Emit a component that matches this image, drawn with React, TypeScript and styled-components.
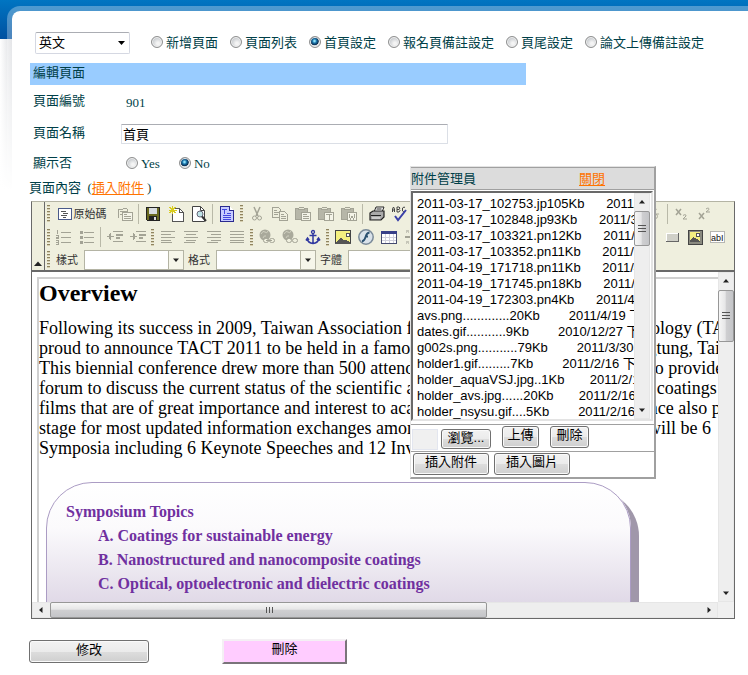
import React from "react";
import styled, { createGlobalStyle, css } from "styled-components";
import {
  Undo, Redo, Search, Replace, SquareDashed, Eraser, Bold, Italic, Underline, Strikethrough,
  Smile, Omega, FileMinus, FormInput, CheckSquare, CircleDot, TextCursorInput, AlignJustify,
  List, ChevronsUpDown,
} from "lucide-react";

const serif = `"Liberation Serif", "Noto Sans CJK TC", serif`;
const sans = `"Liberation Sans", "Noto Sans CJK TC", sans-serif`;
const ink = "#003f48";

const GlobalStyle = createGlobalStyle`
  * { box-sizing: border-box; }
  body {
    margin: 0;
    color: ${ink};
    font: 13px/16px ${serif};
    background: #fff;
    overflow: hidden;
  }
`;

const Page = styled.div`
  padding: 6px 0 0 7px;
  background:
    linear-gradient(#0075c2, #0050a0) 0 0 / 100% 39px no-repeat,
    linear-gradient(rgba(255, 255, 255, 0) 39px, #fff 190px),
    linear-gradient(to right, #fff, #d8dade 12px);
`;

const Shell = styled.div`
  position: relative;
  border: solid rgba(255, 255, 255, 0.3);
  border-width: 5px 0 0 5px;
  border-radius: 13px 0 0 0;
  background: #fff;
  background-clip: padding-box;
  padding: 21px 13px 12px 0;
`;

const TopBar = styled.div`
  display: flex;
  align-items: center;
  height: 22px;
  padding-left: 23px;
  margin-bottom: 9px;
  white-space: nowrap;
`;

const LanguageBox = styled.label`
  position: relative;
  display: flex;
  margin-right: 21px;
  svg {
    position: absolute;
    right: 5px;
    top: 9px;
    pointer-events: none;
  }
`;

const Language = styled.select`
  appearance: none;
  width: 95px;
  height: 22px;
  padding: 0 3px;
  border: 1px solid #d5d8e2;
  border-top-color: #abadb3;
  border-radius: 2px;
  background: #fff;
  color: #000;
  font: 13px/18px ${sans};
`;

const RadioLabel = styled.label<{ $gap?: number }>`
  display: inline-flex;
  align-items: center;
  gap: 3px;
  margin-right: ${(p) => p.$gap ?? 12}px;
`;

const Radio = styled.input.attrs({ type: "radio" })`
  appearance: none;
  width: 12px;
  height: 12px;
  margin: 0 0 2px;
  border: 1px solid #8e8f8f;
  border-radius: 50%;
  background: radial-gradient(circle at 60% 65%, #f4f4f4 0 15%, #c4c8cc 70%);
  box-shadow: inset 0 0 0 1px #f0f0f0;
  &:checked {
    background: radial-gradient(circle at 45% 40%, #8fe0f8 0 8%, #1a76ac 25%, #0a2c50 48%, #d4dadf 56%);
  }
`;

const SectionTitle = styled.h1`
  width: 496px;
  height: 22px;
  margin: 0 0 0 18px;
  padding: 2px 3px 0;
  background: #99ccff;
  font: 13px/16px ${serif};
`;

const FormRow = styled.div<{ $h: number }>`
  display: flex;
  align-items: center;
  height: ${(p) => p.$h}px;
  padding-left: 21px;
`;

const FieldName = styled.span`
  width: 88px;
  padding-bottom: 2px;
`;

const Value = styled.span`
  padding: 1px 0 0 5px;
`;

const NameInput = styled.input`
  width: 327px;
  height: 20px;
  padding: 0 1px 2px;
  border: 1px solid #dbdfe6;
  border-top-color: #abadb3;
  border-radius: 1px;
  color: #000;
  font: 13px/16px ${sans};
`;

const ContentLine = styled.div`
  height: 23px;
  padding: 2px 0 0 17px;
`;

const Orange = styled.a`
  color: #ff7300;
  text-decoration: underline;
  text-underline-offset: 2px;
`;

/* ---------- editor toolbar ---------- */

const Editor = styled.section`
  margin-left: 19px;
  border: 1px solid #696969;
  border-top-color: #b4b4a4;
`;

const Toolbar = styled.div`
  display: flex;
  height: 70px;
  background: #efefde;
  border-bottom: 2px solid #696969;
  overflow: hidden;
`;

const Collapse = styled.button`
  display: flex;
  align-items: flex-end;
  flex: none;
  width: 13px;
  padding: 0 0 2px 2px;
  border: 0;
  border-right: 1px solid #696969;
  background: none;
`;

const ToolRows = styled.div`
  flex: none;
`;

const ToolRow = styled.div<{ $h: number }>`
  display: flex;
  align-items: center;
  height: ${(p) => p.$h}px;
  color: #333;
  font: 11px/14px ${sans};
  white-space: nowrap;
`;

const Grip = styled.span`
  flex: none;
  width: 3px;
  height: 17px;
  margin: 0 2px;
  background: repeating-linear-gradient(#8f8460 0 1px, #d6cfb0 1px 2px, #efefde 2px 3px);
`;

const Sep = styled.span`
  flex: none;
  width: 1px;
  height: 20px;
  margin: 0 2px;
  background: #b9b9a8;
`;

const Tool = styled.button<{ $off?: boolean }>`
  display: inline-flex;
  align-items: center;
  justify-content: center;
  flex: none;
  width: 23px;
  height: 22px;
  padding: 0;
  border: 0;
  background: none;
  color: ${(p) => (p.$off ? "#a3a395" : "#333")};
`;

const SourceTool = styled(Tool)`
  gap: 2px;
  width: 61px;
  padding-right: 1px;
  font: 11px/14px ${sans};
`;

const Combo = styled.label`
  display: inline-flex;
  align-items: center;
  gap: 6px;
  margin-left: 4px;
`;

const ComboBox = styled.span`
  display: inline-flex;
  width: 100px;
  height: 20px;
  border: 1px solid #b4b4a4;
  background: #fff;
`;

const ComboSelect = styled.select`
  appearance: none;
  flex: 1;
  min-width: 0;
  border: 0;
  background: none;
  padding: 0;
`;

const ComboArrow = styled.span`
  display: flex;
  align-items: center;
  justify-content: center;
  width: 15px;
  border-left: 1px solid #b4b4a4;
  background: #f6f6ea;
`;

/* ---------- editing area ---------- */

const Frame = styled.div`
  display: grid;
  grid-template: 330px 16px / 1fr 16px;
  background: #fff;
`;

const Viewport = styled.div`
  overflow: hidden;
  min-width: 0;
  padding: 5px 0 0 5px;
`;

const Doc = styled.div`
  height: 400px;
  border: 2px solid #d0d0d0;
  border-right: 0;
  color: #000;
  font: 18px/20px "Liberation Serif", serif;
  white-space: nowrap;
`;

const DocTitle = styled.h2`
  margin: 0 0 11px;
  font: bold 24px/28px "Liberation Serif", serif;
`;

const DocText = styled.p`
  margin: 0;
`;

const Topics = styled.div`
  width: 585px;
  height: 200px;
  margin: 24px 0 0 7px;
  padding: 17px 19px;
  border: 1px solid #ab9cc4;
  border-radius: 46px;
  background: linear-gradient(#fff 0, #fbfafc 45px, #e0d9e7 120px);
  box-shadow: 8px 8px 0 #a097aa;
  color: #7030a0;
  font: bold 16px/24px "Liberation Serif", serif;
`;

const TopicList = styled.ol`
  margin: 0;
  padding-left: 32px;
  list-style: none;
`;

const thumb = css`
  border: 1px solid #979797;
  border-radius: 2px;
`;

const Track = styled.div<{ $row?: boolean }>`
  display: flex;
  flex: 0 0 16px;
  flex-direction: ${(p) => (p.$row ? "row" : "column")};
  align-items: stretch;
  background: #eeeeee;
  box-shadow: inset 0 0 0 1px #e6e6e6;
  min-width: 0;
`;

const Thumb = styled.div<{ $row?: boolean; $len: number }>`
  ${thumb}
  display: flex;
  align-items: center;
  justify-content: center;
  flex: 0 1 ${(p) => p.$len}px;
  background: linear-gradient(${(p) => (p.$row ? "to bottom" : "to right")}, #f6f6f6, #e6e6e7 45%, #cfcfd1 50%, #c4c5c8);
`;

const Arrow = styled.span`
  display: flex;
  align-items: center;
  justify-content: center;
  flex: 0 0 18px;
`;

const Spring = styled.span`
  flex: 1;
`;

const Corner = styled.div`
  background: #f0f0f0;
`;

/* ---------- attachment window ---------- */

const Popup = styled.aside`
  position: absolute;
  left: 398px;
  top: 155px;
  width: 246px;
  border: 1px solid #a0a0a0;
  border-width: 1px 2px 2px 1px;
  border-style: solid double double solid;
  border-left-color: #e3e3e3;
  border-top-color: #e3e3e3;
  background: #fff;
`;

const PopupHead = styled.header`
  display: flex;
  height: 23px;
  padding-top: 3px;
  border: 1px solid #a0a0a0;
  border-width: 1px 0;
  background: #dcdcdc;
`;

const PopupTitle = styled.span`
  width: 168px;
`;

const ListFrame = styled.div`
  display: flex;
  height: 230px;
  margin: 1px 1px 3px 0;
  padding: 0 1px 0 1px;
  border: 2px solid #696969;
  border-right-color: #e3e3e3;
  border-bottom-color: #e3e3e3;
`;

const FileList = styled.select`
  flex: 1;
  min-width: 0;
  height: 226px;
  padding: 0;
  border: 0;
  outline: 0;
  overflow: hidden;
  scrollbar-width: none;
  background: #fff;
  color: #000;
  font: 13px/16px ${sans};
`;

const FileOption = styled.option`
  height: 16px;
  min-height: 16px;
  padding: 0 0 0 3px;
  line-height: 14px;
  color: #000;
`;

const Actions = styled.div<{ $h: number }>`
  display: flex;
  align-items: flex-start;
  height: ${(p) => p.$h}px;
  padding: 1px 2px;
  border-top: 1px solid #a0a0a0;
`;

const FileField = styled.input`
  width: 26px;
  height: 21px;
  margin: 3px 3px 0 -1px;
  border: 1px solid #e3e6ef;
  background: #f0f0f0;
`;

const Button = styled.button<{ $w: number; $h?: number; $gap?: number }>`
  width: ${(p) => p.$w}px;
  height: ${(p) => p.$h ?? 22}px;
  margin-right: ${(p) => p.$gap ?? 0}px;
  padding: 0 0 4px;
  border: 1px solid #707070;
  border-radius: 3px;
  box-shadow: inset 0 0 0 1px #fafafa;
  background: linear-gradient(#f2f2f2, #ebebeb 50%, #dddddd 51%, #cfcfcf);
  color: #000;
  font: 13px/16px ${sans};
  white-space: nowrap;
`;

const BrowseButton = styled(Button)`
  margin-top: 3px;
  padding-bottom: 2px;
`;

const PinkButton = styled.button`
  width: 125px;
  height: 25px;
  padding: 0 0 5px;
  border: 2px solid;
  border-color: #f4f0f4 #7a747a #7a747a #f4f0f4;
  background: #ffccff;
  color: #000;
  font: 13px/16px ${sans};
`;

const Footer = styled.footer`
  display: flex;
  align-items: center;
  gap: 73px;
  padding: 20px 0 0 17px;
`;

/* ---------- icons ---------- */

function Ico({ children, w = 16, smooth = false }: { children: React.ReactNode; w?: number; smooth?: boolean }) {
  return (
    <svg width={w} height="16" viewBox={`0 0 ${w} 16`} fill="none" stroke="currentColor" shapeRendering={smooth ? "auto" : "crispEdges"} aria-hidden="true">
      {children}
    </svg>
  );
}

function Tri({ dir, size = 3 }: { dir: "up" | "down" | "left" | "right"; size?: number }) {
  const turn = { up: 180, down: 0, left: 90, right: 270 }[dir];
  return (
    <svg width="8" height="8" viewBox="-4 -4 8 8" aria-hidden="true">
      <path d={`M${-size} ${-size / 2}H${size}L0 ${size / 2 + 0.5}Z`} fill="#222" transform={`rotate(${turn})`} />
    </svg>
  );
}

function Ridges({ row }: { row?: boolean }) {
  return (
    <svg width="8" height="8" viewBox="0 0 8 8" stroke="#555" shapeRendering="crispEdges" aria-hidden="true">
      <path d={row ? "M1.5 1v6M4.5 1v6M7.5 1v6" : "M0 .5h8M0 3.5h8M0 6.5h8"} />
    </svg>
  );
}

const SourceIcon = () => (
  <Ico w={14}><rect x=".5" y="2.5" width="13" height="11" fill="#fff" stroke="#4a5a8a" /><path d="M3 5.5h5M5 7.5h5M3 9.5h6M5 11.5h3" stroke="#555" /></Ico>
);
const TemplatesIcon = () => (
  <Ico><path d="M1.5 12V3.5h4l1-1.5h3l1 1.5v3M3 5.5h7M3 8.5h2" /><rect x="5.5" y="6.5" width="10" height="8" fill="#f4f4e8" /><path d="M7 8.5h3M7 10.5h7M7 12.5h7" /></Ico>
);
const SaveIcon = () => (
  <Ico><path d="M1.5 1.5h13v13H2.5l-1-1z" fill="#6a6a20" stroke="#222" /><rect x="4" y="2" width="8" height="6" fill="#d8dce0" stroke="none" /><rect x="4" y="10" width="8" height="4" fill="#222" stroke="none" /><rect x="9" y="11" width="2" height="3" fill="#ddd" stroke="none" /></Ico>
);
const NewIcon = () => (
  <Ico><path d="M4.5 2.5h7l4 4v9h-11z" fill="#fff" stroke="#555" /><path d="M11.5 2.5v4h4" stroke="#555" /><path d="M4.5 0v8M.5 4h8M1.5 1l6 6M7.5 1l-6 6" stroke="#d8cc20" /></Ico>
);
const PreviewIcon = () => (
  <Ico smooth><path d="M1.5 .5h8l4 4v11h-12z" fill="#fff" stroke="#444" /><path d="M9.5 .5v4h4" stroke="#444" /><circle cx="9" cy="8" r="3" fill="#bfe4e8" stroke="#667" /><path d="M11 10.5l4 4.500" stroke="#333" strokeWidth="2" /></Ico>
);
const DocIcon = () => (
  <Ico><path d="M1.5 .5h9l4 4v11h-13z" fill="#c8ccff" stroke="#2a2a90" /><path d="M10.5 .5v4h4" fill="#fff" stroke="#2a2a90" /><path d="M3 3.5h5M5.500 3v5M8 7.5h4M4 9.5h8M4 11.5h8M4 13.5h8" stroke="#4448e0" /></Ico>
);
const CutIcon = () => (
  <Ico smooth><path d="M5 1l4 9M11 1L7 10" strokeWidth="1.5" /><circle cx="5.5" cy="12" r="2" /><circle cx="10.5" cy="12" r="2" /></Ico>
);
const CopyIcon = () => (
  <Ico><path d="M.5 1.5h6l2 2v8h-8zM2 4.5h3M2 6.5h5M2 8.5h4" /><path d="M7.5 5.5h5l3 3v6h-8z" fill="#f0f0e0" /><path d="M9 8.5h3M9 10.5h5M9 12.5h5" /></Ico>
);
const PasteIcon = ({ mark }: { mark: "page" | "T" | "W" }) => (
  <Ico><path d="M.5 2.5h12v11H.5z" fill="#b6b6a8" /><path d="M3.5 3.5v-1l2-1.5h2l2 1.5v1z" fill="#e8e8d8" /><rect x="6.5" y="6.5" width="9" height="8" fill="#f4f4e8" />
    <path d={mark === "T" ? "M8 8.5h6M11 8v6" : mark === "W" ? "M8.5 8v3l1 2 1.5-3 1.5 3 1-2V8" : "M8 8.5h4M8 10.5h6M8 12.5h6"} /></Ico>
);
const PrintIcon = () => (
  <Ico smooth><path d="M5 6l2-5h8l-2 5z" fill="#fff" stroke="#222" /><path d="M1 7l3-2h11v6l-3 3H1z" fill="#aaa" stroke="#222" strokeWidth="1.2" /><path d="M2 9.5h10M7.5 3h5" stroke="#222" /><path d="M3 12h8" stroke="#eee" /></Ico>
);
const SpellIcon = () => (
  <Ico smooth><path d="M.5 6V3l1-2 1 2v3M.5 4h2M5 1v5h2l1-1.5-1-1L8 2 7 1zM5 3.500h2M13 1.500L12 1l-1.500 1v3L12 6l1-.5" stroke="#444" /><path d="M3 10l3 4 8-10" stroke="#3a40a8" strokeWidth="2" /></Ico>
);
const SubIcon = () => (
  <Ico smooth><path d="M2 3l5 6M7 3L2 9" strokeWidth="1.5" /><path d="M9 9.5q3-2 3 .5L9 13h4" /></Ico>
);
const SupIcon = () => (
  <Ico smooth><path d="M2 7l5 6M7 7l-5 6" strokeWidth="1.5" /><path d="M9 3q3-2 3 .5L9 6h4" /></Ico>
);
const NumberedIcon = () => (
  <Ico><path d="M1.5 1v4M5 3.5h10M5 8.5h10M5 13.5h10M0 6.5h2v2H.5v1H3M0 11.5h2.5v4H0M0 13.5h2" /></Ico>
);
const BulletIcon = () => (
  <Ico><path d="M5 3.5h10M5 8.5h10M5 13.5h10" /><path d="M1 2h3v3H1zM1 7h3v3H1zM1 12h3v3H1z" fill="currentColor" stroke="none" /></Ico>
);
const IndentIcon = ({ out }: { out?: boolean }) => (
  <Ico><path d="M6 2.5h10M9 5.5h7M9 6.5h7M9 8.5h4M9 9.5h4M6 12.5h10" /><path d={out ? "M0 7.5h7M2.5 5v5M3.5 4v7" : "M0 7.5h7M4.5 5v5M3.5 4v7"} /></Ico>
);
const AlignIcon = ({ kind }: { kind: "l" | "c" | "r" | "j" }) => {
  const x = { l: 1, c: 3, r: 5, j: 1 }[kind];
  const w = kind === "j" ? 14 : 10;
  return <Ico><path d={`M1 2.5h14M${x} 5.5h${w}M1 8.5h14M${x} 11.5h${w}M1 13.5h${kind === "j" ? 14 : 11}`} /></Ico>;
};
const LinkIcon = ({ cut }: { cut?: boolean }) => (
  <Ico smooth><circle cx="6" cy="6" r="5.5" fill="#a9a99b" stroke="none" /><path d="M2 5q2-4 4-2t3-1M4 9q1-3 3-2" stroke="#d0d0c0" /><rect x="4.5" y="9.5" width="5" height="4" rx="2" fill="#efefde" /><rect x="10.5" y="9.5" width="5" height="4" rx="2" fill="#efefde" />{!cut && <path d="M7 11.5h6" />}</Ico>
);
const AnchorIcon = () => (
  <Ico smooth><circle cx="8" cy="3" r="1.5" stroke="#3038a0" strokeWidth="1.3" /><path d="M8 4.5V14M4.5 6.5h7M2 9.5q1 4.500 6 5 5-.5 6-5M1 11.5l1.5-2.5L4 11M12 11l1.5-2 1.5 2.5" stroke="#3038a0" strokeWidth="1.5" /></Ico>
);
const PictureIcon = () => (
  <Ico><rect x=".5" y="1.5" width="15" height="13" fill="#f4f080" stroke="#444" /><rect x="11" y="4" width="3" height="3" fill="#fff" stroke="#555" /><path d="M1 14l5-5 3 3 2-1 4 3z" fill="#555" stroke="#555" /></Ico>
);
const FlashIcon = () => (
  <Ico smooth><circle cx="8" cy="8" r="7.2" fill="#d9e2ea" stroke="#7a8a99" strokeWidth="1.5" /><path d="M11.5 3.5Q8.5 4 7.5 8T4 12.5M7 7.500h3" stroke="#2a5070" strokeWidth="1.8" /></Ico>
);
const TableIcon = () => (
  <Ico><rect x=".5" y="2.5" width="15" height="12" fill="#fff" stroke="#444a70" /><rect x="0" y="2" width="16" height="3" fill="#384088" stroke="none" /><path d="M1 8.5h14M1 11.5h14M4.5 5v9M8.5 5v9M12.5 5v9" stroke="#d0d0dc" /></Ico>
);
const RuleIcon = () => (
  <Ico><path d="M1 8h14" strokeWidth="2" /><path d="M2.5 4V1M4.5 4V1M2.5 1h2M2.5 2.5h2M2.5 15v-3M4.5 15v-3M2.5 12h2M2.5 13.5h2" stroke="#c6c6b8" /></Ico>
);
const PushIcon = () => (
  <Ico><rect x="2" y="4" width="13" height="9" fill="#d0d0c8" stroke="none" /><path d="M2 12.500h13M14.500 4v9" stroke="#666" /><path d="M2 4.500h12M2.500 4v8" stroke="#fff" /></Ico>
);
const ImageButtonIcon = () => (
  <Ico><rect x="1" y="1" width="14" height="14" fill="#8a8a80" stroke="#444" /><rect x="3" y="3" width="10" height="10" fill="#f4f080" stroke="none" /><rect x="9" y="4" width="3" height="3" fill="#fff" stroke="#555" /><path d="M3 13v-2l3-3 4 2 3 3z" fill="#555" stroke="none" /></Ico>
);
const HiddenFieldIcon = () => (
  <svg width="16" height="16" viewBox="0 0 16 16" aria-hidden="true">
    <rect x=".5" y="2.5" width="14" height="11" fill="#fff" stroke="#777" strokeDasharray="1 1" />
    <text x="1" y="12" fontFamily="Liberation Sans" fontSize="9" fill="#111">abI</text>
  </svg>
);

type ToolItem = "|" | "#" | [string, React.ReactNode, boolean?];

const small = { size: 14, strokeWidth: 1.5 };

const firstRow: ToolItem[] = [
  ["樣版", <TemplatesIcon />, true], "|",
  ["儲存", <SaveIcon />], ["開新檔案", <NewIcon />], ["預覽", <PreviewIcon />], "|",
  ["文件樣版", <DocIcon />], "#",
  ["剪下", <CutIcon />, true], ["複製", <CopyIcon />, true], ["貼上", <PasteIcon mark="page" />, true],
  ["貼為純文字", <PasteIcon mark="T" />, true], ["自 Word 貼上", <PasteIcon mark="W" />, true], "|",
  ["列印", <PrintIcon />], ["拼字檢查", <SpellIcon />], "|",
  ["復原", <Undo {...small} />, true], ["重複", <Redo {...small} />, true], "|",
  ["尋找", <Search {...small} />], ["取代", <Replace {...small} />], "#",
  ["全選", <SquareDashed {...small} />], ["清除格式", <Eraser {...small} />], "#",
  ["粗體", <Bold {...small} />, true], ["斜體", <Italic {...small} />, true],
  ["底線", <Underline {...small} />, true], ["刪除線", <Strikethrough {...small} />, true], "|",
  ["下標", <SubIcon />, true], ["上標", <SupIcon />, true],
];

const secondRow: ToolItem[] = [
  ["編號清單", <NumberedIcon />, true], ["項目清單", <BulletIcon />, true], "|",
  ["減少縮排", <IndentIcon out />, true], ["增加縮排", <IndentIcon />, true], "#",
  ["靠左對齊", <AlignIcon kind="l" />, true], ["置中", <AlignIcon kind="c" />, true],
  ["靠右對齊", <AlignIcon kind="r" />, true], ["左右對齊", <AlignIcon kind="j" />, true], "#",
  ["超連結", <LinkIcon />, true], ["移除超連結", <LinkIcon cut />, true], ["錨點", <AnchorIcon />], "#",
  ["影像", <PictureIcon />], ["Flash", <FlashIcon />], ["表格", <TableIcon />], ["水平線", <RuleIcon />, true],
  ["表情符號", <Smile {...small} />], ["特殊符號", <Omega {...small} />], ["分頁符號", <FileMinus {...small} />], "#",
  ["表單", <FormInput {...small} />], ["核取方塊", <CheckSquare {...small} />], ["選項按鈕", <CircleDot {...small} />],
  ["文字方塊", <TextCursorInput {...small} />], ["文字區域", <AlignJustify {...small} />],
  ["清單", <List {...small} />], ["選單", <ChevronsUpDown {...small} />],
  ["按鈕", <PushIcon />], ["影像按鈕", <ImageButtonIcon />], ["隱藏欄位", <HiddenFieldIcon />],
];

function Tools({ items }: { items: ToolItem[] }) {
  return (
    <>
      {items.map((item, i) => {
        if (item === "|") return <Sep key={i} />;
        if (item === "#") return <Grip key={i} />;
        return <Tool key={i} type="button" aria-label={item[0]} $off={item[2]}>{item[1]}</Tool>;
      })}
    </>
  );
}

const modes = ["新增頁面", "頁面列表", "首頁設定", "報名頁備註設定", "頁尾設定", "論文上傳備註設定"];

/* name and size, spaces before the date, date */
const files: [string, number, string][] = [
  ["2011-03-17_102753.jp105Kb", 6, "2011/3/17 下午"],
  ["2011-03-17_102848.jp93Kb", 6, "2011/3/17 下午"],
  ["2011-03-17_103321.pn12Kb", 6, "2011/3/17 下午"],
  ["2011-03-17_103352.pn11Kb", 6, "2011/3/17 下午"],
  ["2011-04-19_171718.pn11Kb", 6, "2011/4/19 下午"],
  ["2011-04-19_171745.pn18Kb", 6, "2011/4/19 下午"],
  ["2011-04-19_172303.pn4Kb", 6, "2011/4/19 下午"],
  ["avs.png.............20Kb", 8, "2011/4/19 下午"],
  ["dates.gif...........9Kb", 8, "2010/12/27 下午"],
  ["g002s.png...........79Kb", 8, "2011/3/30 下午"],
  ["holder1.gif.........7Kb", 8, "2011/2/16 下午"],
  ["holder_aquaVSJ.jpg..1Kb", 7, "2011/2/16 下午"],
  ["holder_avs.jpg......20Kb", 7, "2011/2/16 下午"],
  ["holder_nsysu.gif....5Kb", 8, "2011/2/16 下午"],
];

const lines = [
  "Following its success in 2009, Taiwan Association for Coating and Thin Films Technology (TACT) is",
  "proud to announce TACT 2011 to be held in a famous sea resort area in Kenting, Pingtung, Taiwan.",
  "This biennial conference drew more than 500 attendees from all over the world. It is to provide a",
  "forum to discuss the current status of the scientific and technological advance in hard coatings and",
  "films that are of great importance and interest to academia and industries. Its conference also provides a",
  "stage for most updated information exchanges among all the key participants. There will be 6",
  "Symposia including 6 Keynote Speeches and 12 Invited Speeches.",
];

function VerticalScroll({ len }: { len: number }) {
  return (
    <Track>
      <Arrow><Tri dir="up" /></Arrow>
      <Thumb $len={len}><Ridges /></Thumb>
      <Spring />
      <Arrow><Tri dir="down" /></Arrow>
    </Track>
  );
}

export default function App() {
  return (
    <>
      <GlobalStyle />
      <Page>
        <Shell>
          <TopBar>
            <LanguageBox>
              <Language aria-label="語言" defaultValue="en">
                <option value="en">英文</option>
                <option value="zh">中文</option>
              </Language>
              <svg width="7" height="4" viewBox="0 0 7 4" aria-hidden="true"><path d="M0 0h7L3.500 4z" fill="#000" /></svg>
            </LanguageBox>
            {modes.map((m, i) => (
              <RadioLabel key={m}><Radio name="mode" defaultChecked={i === 2} />{m}</RadioLabel>
            ))}
          </TopBar>

          <SectionTitle>編輯頁面</SectionTitle>
          <FormRow $h={34}><FieldName>頁面編號</FieldName><Value>901</Value></FormRow>
          <FormRow $h={30}>
            <FieldName as="label" htmlFor="page-name">頁面名稱</FieldName>
            <NameInput id="page-name" defaultValue="首頁" />
          </FormRow>
          <FormRow $h={29}>
            <FieldName>顯示否</FieldName>
            <Value>
              <RadioLabel $gap={19}><Radio name="show" />Yes</RadioLabel>
              <RadioLabel><Radio name="show" defaultChecked />No</RadioLabel>
            </Value>
          </FormRow>
          <ContentLine>頁面內容&nbsp; (<Orange href="#attach">插入附件</Orange> )</ContentLine>

          <Editor>
            <Toolbar>
              <Collapse type="button" aria-label="收合工具列"><Tri dir="up" size={4} /></Collapse>
              <ToolRows>
                <ToolRow $h={23}>
                  <Grip />
                  <SourceTool type="button"><SourceIcon />原始碼</SourceTool>
                  <Tools items={firstRow} />
                </ToolRow>
                <ToolRow $h={24}><Grip /><Tools items={secondRow} /></ToolRow>
                <ToolRow $h={21}>
                  <Grip />
                  {["樣式", "格式", "字體", "大小"].map((name) => (
                    <Combo key={name}>
                      {name}
                      <ComboBox>
                        <ComboSelect><option></option></ComboSelect>
                        <ComboArrow><Tri dir="down" /></ComboArrow>
                      </ComboBox>
                    </Combo>
                  ))}
                </ToolRow>
              </ToolRows>
            </Toolbar>
            <Frame>
              <Viewport>
                <Doc>
                  <DocTitle>Overview</DocTitle>
                  <DocText>{lines.map((l) => <React.Fragment key={l}>{l}<br /></React.Fragment>)}</DocText>
                  <Topics>
                    Symposium Topics
                    <TopicList>
                      <li>A. Coatings for sustainable energy</li>
                      <li>B. Nanostructured and nanocomposite coatings</li>
                      <li>C. Optical, optoelectronic and dielectric coatings</li>
                    </TopicList>
                  </Topics>
                </Doc>
              </Viewport>
              <VerticalScroll len={52} />
              <Track $row>
                <Arrow><Tri dir="left" /></Arrow>
                <Thumb $row $len={437}><Ridges row /></Thumb>
                <Spring />
                <Arrow><Tri dir="right" /></Arrow>
              </Track>
              <Corner />
            </Frame>
          </Editor>

          <Footer>
            <Button type="button" $w={120} $h={23}>修改</Button>
            <PinkButton type="button">刪除</PinkButton>
          </Footer>

          <Popup>
            <PopupHead>
              <PopupTitle>附件管理員</PopupTitle>
              <Orange href="#close">關閉</Orange>
            </PopupHead>
            <ListFrame>
              <FileList size={14} aria-label="附件">
                {files.map(([name, gap, date]) => (
                  <FileOption key={name}>{name + "\u00a0".repeat(gap) + date}</FileOption>
                ))}
              </FileList>
              <VerticalScroll len={35} />
            </ListFrame>
            <Actions $h={27}>
              <FileField aria-label="檔案路徑" readOnly />
              <BrowseButton type="button" $w={50} $h={20} $gap={11}>瀏覽...</BrowseButton>
              <Button type="button" $w={37} $gap={11}>上傳</Button>
              <Button type="button" $w={39}>刪除</Button>
            </Actions>
            <Actions $h={26}>
              <Button type="button" $w={76} $gap={5}>插入附件</Button>
              <Button type="button" $w={76}>插入圖片</Button>
            </Actions>
          </Popup>
        </Shell>
      </Page>
    </>
  );
}
